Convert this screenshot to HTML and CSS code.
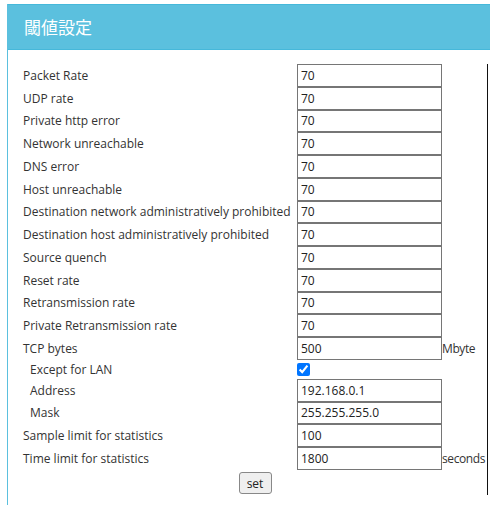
FILE: index.html
```
<!DOCTYPE html>
<html lang="ja">
<head>
<meta charset="utf-8">
<link rel="stylesheet" href="styles.css">
</head>
<body>
<div class="panel">
  <div class="panel-heading">閾値設定</div>
  <div class="panel-body">
    <div class="clip">
      <table class="form">
        <colgroup><col class="c1"><col class="c2"><col class="c3"></colgroup>
        <tr><td class="lbl">Packet Rate</td><td><input class="txt" value="70"></td><td></td></tr>
        <tr><td class="lbl">UDP rate</td><td><input class="txt" value="70"></td><td></td></tr>
        <tr><td class="lbl">Private http error</td><td><input class="txt" value="70"></td><td></td></tr>
        <tr><td class="lbl">Network unreachable</td><td><input class="txt" value="70"></td><td></td></tr>
        <tr><td class="lbl">DNS error</td><td><input class="txt" value="70"></td><td></td></tr>
        <tr><td class="lbl">Host unreachable</td><td><input class="txt" value="70"></td><td></td></tr>
        <tr><td class="lbl">Destination network administratively prohibited</td><td><input class="txt" value="70"></td><td></td></tr>
        <tr><td class="lbl">Destination host administratively prohibited</td><td><input class="txt" value="70"></td><td></td></tr>
        <tr><td class="lbl">Source quench</td><td><input class="txt" value="70"></td><td></td></tr>
        <tr><td class="lbl">Reset rate</td><td><input class="txt" value="70"></td><td></td></tr>
        <tr><td class="lbl">Retransmission rate</td><td><input class="txt" value="70"></td><td></td></tr>
        <tr><td class="lbl">Private Retransmission rate</td><td><input class="txt" value="70"></td><td></td></tr>
        <tr><td class="lbl">TCP bytes</td><td><input class="txt" value="500"></td><td class="unit">Mbyte</td></tr>
        <tr class="cbrow"><td class="lbl sub">Except for LAN</td><td><input type="checkbox" class="cb" checked></td><td></td></tr>
        <tr><td class="lbl sub">Address</td><td><input class="txt" value="192.168.0.1"></td><td></td></tr>
        <tr><td class="lbl sub">Mask</td><td><input class="txt" value="255.255.255.0"></td><td></td></tr>
        <tr><td class="lbl">Sample limit for statistics</td><td><input class="txt" value="100"></td><td></td></tr>
        <tr><td class="lbl">Time limit for statistics</td><td><input class="txt" value="1800"></td><td class="unit">seconds</td></tr>
        <tr><td colspan="3" class="btncell"><button class="btn">set</button></td></tr>
      </table>
    </div>
  </div>
</div>
</body>
</html>
```
FILE: styles.css
```
html, body {
  margin: 0;
  padding: 0;
  background: #fff;
  overflow: hidden;
}
body {
  font-family: "Open Sans", "Noto Sans", "Noto Sans CJK JP", sans-serif;
  color: #333;
}
.panel {
  margin: 4px 0 0 7px;
  width: 482px;
  border-left: 1px solid #5bc0de;
  height: 501px;
}
.panel-heading {
  background: #5bc0de;
  border-top: 1px solid #46b8da;
  border-bottom: 1px solid #46b8da;
  height: 44px;
  line-height: 44px;
  padding-left: 16px;
  color: #fff;
  font-size: 17px;
  font-family: "Noto Sans CJK JP", sans-serif;
}
.panel-body {
  padding: 14px 0 0 15px;
}
.clip {
  width: 464px;
  border-right: 1px solid #111;
}
.form {
  border-collapse: collapse;
  table-layout: fixed;
  width: 464px;
  font-size: 12px;
}
.c1 { width: 274px; }
.c2 { width: 145px; }
.c3 { width: 45px; }
.form td {
  padding: 0;
  height: 22.75px;
  white-space: nowrap;
  overflow: visible;
}
.form td.sub {
  padding-left: 7px;
}
.txt {
  box-sizing: border-box;
  width: 145px;
  height: 22.75px;
  margin: 0;
  padding: 0 3px;
  border: 1px solid #767676;
  font-family: "Open Sans", sans-serif;
  font-size: 12px;
  color: #222;
  display: block;
}
.unit {
  font-size: 12px;
  color: #333;
  letter-spacing: -0.4px;
}
.form tr.cbrow td {
  height: 19px;
}
.cb {
  margin: 0;
  width: 13px;
  height: 13px;
  accent-color: #0075ff;
  display: block;
}
.btncell {
  text-align: center;
  padding-top: 2px !important;
}
.btn {
  font-family: "Open Sans", sans-serif;
  font-size: 12px;
  height: 22px;
  width: 33px;
  padding: 0;
  border: 1px solid #888;
  border-radius: 3px;
  background: #efefef;
  color: #222;
}
```
